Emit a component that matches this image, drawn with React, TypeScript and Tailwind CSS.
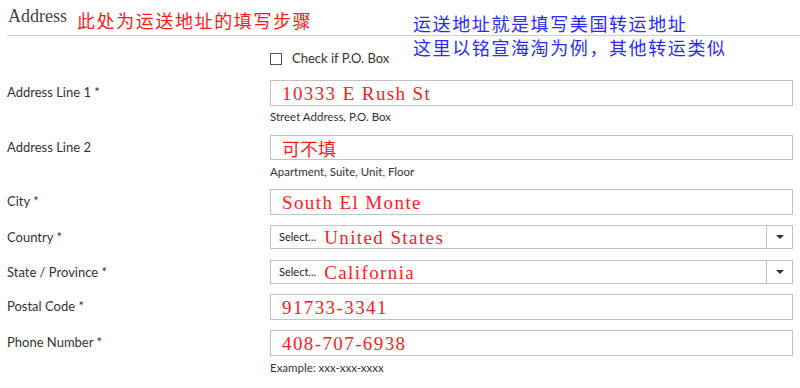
const SANS = "font-['Lato','Open_Sans',sans-serif]";
const RED =
  "text-[#ff1a1a] text-[19px] tracking-[1.4px] font-['Liberation_Serif','Noto_Sans_CJK_SC',serif]";

type Field = {
  label: string;
  value: string;
  select?: boolean;
  help?: string;
  mt: string;
  h: string;
  helpMt?: string;
};

const FIELDS: Field[] = [
  { label: "Address Line 1 *", value: "10333 E Rush St", help: "Street Address, P.O. Box", mt: "mt-[15px]", h: "h-[26px]", helpMt: "mt-[4px]" },
  { label: "Address Line 2", value: "可不填", help: "Apartment, Suite, Unit, Floor", mt: "mt-[11px]", h: "h-[25px]", helpMt: "mt-[5px]" },
  { label: "City *", value: "South El Monte", mt: "mt-[10px]", h: "h-[26px]" },
  { label: "Country *", value: "United States", select: true, mt: "mt-[10px]", h: "h-[24px]" },
  { label: "State / Province *", value: "California", select: true, mt: "mt-[11px]", h: "h-[24px]" },
  { label: "Postal Code *", value: "91733-3341", mt: "mt-[10px]", h: "h-[26px]" },
  { label: "Phone Number *", value: "408-707-6938", help: "Example: xxx-xxx-xxxx", mt: "mt-[10px]", h: "h-[26px]", helpMt: "mt-[5px]" },
];

function Row({ f }: { f: Field }) {
  return (
    <div className={`grid grid-cols-[263px_1fr] ${f.mt}`}>
      <div className={`${SANS} pt-[2px] text-[13px] leading-[20px] text-[#333]`}>{f.label}</div>
      <div className="flex flex-col">
        <div className={`flex ${f.h} items-center border border-[#c2c2c2] bg-white`}>
          {f.select ? (
            <>
              <div className="flex flex-1 items-center pl-[8px]">
                <span className={`${SANS} mr-[8px] text-[11px] text-[#222]`}>Select...</span>
                <span className={`${RED} leading-none`}>{f.value}</span>
              </div>
              <div className="flex h-full w-[26px] items-center justify-center border-l border-[#c2c2c2]">
                <span className="h-0 w-0 border-x-[4px] border-t-[4px] border-x-transparent border-t-[#333]" />
              </div>
            </>
          ) : (
            <span
              className={`pl-[11px] leading-none ${
                f.value === "可不填"
                  ? "text-[#ff1a1a] text-[18px] font-['Noto_Sans_CJK_SC',sans-serif]"
                  : RED
              }`}
            >
              {f.value}
            </span>
          )}
        </div>
        {f.help && (
          <div className={`${SANS} ${f.helpMt} text-[11.5px] leading-[14px] text-[#333]`}>{f.help}</div>
        )}
      </div>
    </div>
  );
}

export default function App() {
  return (
    <main className="relative h-[388px] w-[800px] overflow-hidden bg-white">
      <div className="pl-[7px]">
        <header className="flex h-[36px] items-start gap-[10px] border-b border-[#cfcfcf]">
          <h1 className="mt-[4px] pl-[1px] font-['Liberation_Serif',serif] text-[18px] leading-[24px] text-[#444]">
            Address
          </h1>
          <p className="mt-[8px] font-['Noto_Sans_CJK_SC',sans-serif] text-[18px] leading-[24px] tracking-[1.6px] text-[#ff1a1a]">
            此处为运送地址的填写步骤
          </p>
        </header>

        <div className="mr-[7px]">
          <label className="ml-[263px] mt-[17px] flex h-[12px] items-center gap-[10px]">
            <span className="h-[12px] w-[12px] border border-[#555] bg-white" />
            <span className={`${SANS} text-[13px] text-[#333]`}>Check if P.O. Box</span>
          </label>

          {FIELDS.map((f) => (
            <Row key={f.label} f={f} />
          ))}
        </div>
      </div>

      <div className="absolute left-[413px] top-[11px] font-['Noto_Sans_CJK_SC',sans-serif] text-[18px] leading-[24px] tracking-[1.6px] text-[#2a2aff]">
        <p>运送地址就是填写美国转运地址</p>
        <p>这里以铭宣海淘为例，其他转运类似</p>
      </div>
    </main>
  );
}
